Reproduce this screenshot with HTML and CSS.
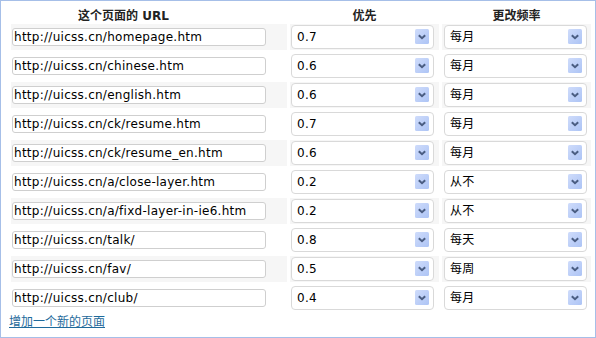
FILE: index.html
```html
<!DOCTYPE html>
<html>
<head>
<meta charset="utf-8">
<link rel="stylesheet" href="styles.css">
</head>
<body>
<div class="frame">
  <table class="grid">
    <thead>
      <tr>
        <th class="h-url">这个页面的 URL</th>
        <th class="h-pri">优先</th>
        <th class="h-freq">更改频率</th>
      </tr>
    </thead>
    <tbody>
      <tr class="odd">
        <td class="c-url"><input class="url" type="text" value="http://uicss.cn/homepage.htm"></td>
        <td class="c-pri"><div class="sel"><span class="val">0.7</span><span class="btn"><svg width="14" height="15" viewBox="0 0 14 15"><rect x="0" y="0" width="14" height="15" rx="1.5" fill="url(#g)"/><path d="M3.8 6.2 L7 9.2 L10.2 6.2" fill="none" stroke="#4a5d82" stroke-width="2"/></svg></span></div></td>
        <td class="c-freq"><div class="sel"><span class="val">每月</span><span class="btn"><svg width="14" height="15" viewBox="0 0 14 15"><rect x="0" y="0" width="14" height="15" rx="1.5" fill="url(#g)"/><path d="M3.8 6.2 L7 9.2 L10.2 6.2" fill="none" stroke="#4a5d82" stroke-width="2"/></svg></span></div></td>
      </tr>
      <tr>
        <td class="c-url"><input class="url" type="text" value="http://uicss.cn/chinese.htm"></td>
        <td class="c-pri"><div class="sel"><span class="val">0.6</span><span class="btn"><svg width="14" height="15" viewBox="0 0 14 15"><rect x="0" y="0" width="14" height="15" rx="1.5" fill="url(#g)"/><path d="M3.8 6.2 L7 9.2 L10.2 6.2" fill="none" stroke="#4a5d82" stroke-width="2"/></svg></span></div></td>
        <td class="c-freq"><div class="sel"><span class="val">每月</span><span class="btn"><svg width="14" height="15" viewBox="0 0 14 15"><rect x="0" y="0" width="14" height="15" rx="1.5" fill="url(#g)"/><path d="M3.8 6.2 L7 9.2 L10.2 6.2" fill="none" stroke="#4a5d82" stroke-width="2"/></svg></span></div></td>
      </tr>
      <tr class="odd">
        <td class="c-url"><input class="url" type="text" value="http://uicss.cn/english.htm"></td>
        <td class="c-pri"><div class="sel"><span class="val">0.6</span><span class="btn"><svg width="14" height="15" viewBox="0 0 14 15"><rect x="0" y="0" width="14" height="15" rx="1.5" fill="url(#g)"/><path d="M3.8 6.2 L7 9.2 L10.2 6.2" fill="none" stroke="#4a5d82" stroke-width="2"/></svg></span></div></td>
        <td class="c-freq"><div class="sel"><span class="val">每月</span><span class="btn"><svg width="14" height="15" viewBox="0 0 14 15"><rect x="0" y="0" width="14" height="15" rx="1.5" fill="url(#g)"/><path d="M3.8 6.2 L7 9.2 L10.2 6.2" fill="none" stroke="#4a5d82" stroke-width="2"/></svg></span></div></td>
      </tr>
      <tr>
        <td class="c-url"><input class="url" type="text" value="http://uicss.cn/ck/resume.htm"></td>
        <td class="c-pri"><div class="sel"><span class="val">0.7</span><span class="btn"><svg width="14" height="15" viewBox="0 0 14 15"><rect x="0" y="0" width="14" height="15" rx="1.5" fill="url(#g)"/><path d="M3.8 6.2 L7 9.2 L10.2 6.2" fill="none" stroke="#4a5d82" stroke-width="2"/></svg></span></div></td>
        <td class="c-freq"><div class="sel"><span class="val">每月</span><span class="btn"><svg width="14" height="15" viewBox="0 0 14 15"><rect x="0" y="0" width="14" height="15" rx="1.5" fill="url(#g)"/><path d="M3.8 6.2 L7 9.2 L10.2 6.2" fill="none" stroke="#4a5d82" stroke-width="2"/></svg></span></div></td>
      </tr>
      <tr class="odd">
        <td class="c-url"><input class="url" type="text" value="http://uicss.cn/ck/resume_en.htm"></td>
        <td class="c-pri"><div class="sel"><span class="val">0.6</span><span class="btn"><svg width="14" height="15" viewBox="0 0 14 15"><rect x="0" y="0" width="14" height="15" rx="1.5" fill="url(#g)"/><path d="M3.8 6.2 L7 9.2 L10.2 6.2" fill="none" stroke="#4a5d82" stroke-width="2"/></svg></span></div></td>
        <td class="c-freq"><div class="sel"><span class="val">每月</span><span class="btn"><svg width="14" height="15" viewBox="0 0 14 15"><rect x="0" y="0" width="14" height="15" rx="1.5" fill="url(#g)"/><path d="M3.8 6.2 L7 9.2 L10.2 6.2" fill="none" stroke="#4a5d82" stroke-width="2"/></svg></span></div></td>
      </tr>
      <tr>
        <td class="c-url"><input class="url" type="text" value="http://uicss.cn/a/close-layer.htm"></td>
        <td class="c-pri"><div class="sel"><span class="val">0.2</span><span class="btn"><svg width="14" height="15" viewBox="0 0 14 15"><rect x="0" y="0" width="14" height="15" rx="1.5" fill="url(#g)"/><path d="M3.8 6.2 L7 9.2 L10.2 6.2" fill="none" stroke="#4a5d82" stroke-width="2"/></svg></span></div></td>
        <td class="c-freq"><div class="sel"><span class="val">从不</span><span class="btn"><svg width="14" height="15" viewBox="0 0 14 15"><rect x="0" y="0" width="14" height="15" rx="1.5" fill="url(#g)"/><path d="M3.8 6.2 L7 9.2 L10.2 6.2" fill="none" stroke="#4a5d82" stroke-width="2"/></svg></span></div></td>
      </tr>
      <tr class="odd">
        <td class="c-url"><input class="url" type="text" value="http://uicss.cn/a/fixd-layer-in-ie6.htm"></td>
        <td class="c-pri"><div class="sel"><span class="val">0.2</span><span class="btn"><svg width="14" height="15" viewBox="0 0 14 15"><rect x="0" y="0" width="14" height="15" rx="1.5" fill="url(#g)"/><path d="M3.8 6.2 L7 9.2 L10.2 6.2" fill="none" stroke="#4a5d82" stroke-width="2"/></svg></span></div></td>
        <td class="c-freq"><div class="sel"><span class="val">从不</span><span class="btn"><svg width="14" height="15" viewBox="0 0 14 15"><rect x="0" y="0" width="14" height="15" rx="1.5" fill="url(#g)"/><path d="M3.8 6.2 L7 9.2 L10.2 6.2" fill="none" stroke="#4a5d82" stroke-width="2"/></svg></span></div></td>
      </tr>
      <tr>
        <td class="c-url"><input class="url" type="text" value="http://uicss.cn/talk/"></td>
        <td class="c-pri"><div class="sel"><span class="val">0.8</span><span class="btn"><svg width="14" height="15" viewBox="0 0 14 15"><rect x="0" y="0" width="14" height="15" rx="1.5" fill="url(#g)"/><path d="M3.8 6.2 L7 9.2 L10.2 6.2" fill="none" stroke="#4a5d82" stroke-width="2"/></svg></span></div></td>
        <td class="c-freq"><div class="sel"><span class="val">每天</span><span class="btn"><svg width="14" height="15" viewBox="0 0 14 15"><rect x="0" y="0" width="14" height="15" rx="1.5" fill="url(#g)"/><path d="M3.8 6.2 L7 9.2 L10.2 6.2" fill="none" stroke="#4a5d82" stroke-width="2"/></svg></span></div></td>
      </tr>
      <tr class="odd">
        <td class="c-url"><input class="url" type="text" value="http://uicss.cn/fav/"></td>
        <td class="c-pri"><div class="sel"><span class="val">0.5</span><span class="btn"><svg width="14" height="15" viewBox="0 0 14 15"><rect x="0" y="0" width="14" height="15" rx="1.5" fill="url(#g)"/><path d="M3.8 6.2 L7 9.2 L10.2 6.2" fill="none" stroke="#4a5d82" stroke-width="2"/></svg></span></div></td>
        <td class="c-freq"><div class="sel"><span class="val">每周</span><span class="btn"><svg width="14" height="15" viewBox="0 0 14 15"><rect x="0" y="0" width="14" height="15" rx="1.5" fill="url(#g)"/><path d="M3.8 6.2 L7 9.2 L10.2 6.2" fill="none" stroke="#4a5d82" stroke-width="2"/></svg></span></div></td>
      </tr>
      <tr>
        <td class="c-url"><input class="url" type="text" value="http://uicss.cn/club/"></td>
        <td class="c-pri"><div class="sel"><span class="val">0.4</span><span class="btn"><svg width="14" height="15" viewBox="0 0 14 15"><rect x="0" y="0" width="14" height="15" rx="1.5" fill="url(#g)"/><path d="M3.8 6.2 L7 9.2 L10.2 6.2" fill="none" stroke="#4a5d82" stroke-width="2"/></svg></span></div></td>
        <td class="c-freq"><div class="sel"><span class="val">每月</span><span class="btn"><svg width="14" height="15" viewBox="0 0 14 15"><rect x="0" y="0" width="14" height="15" rx="1.5" fill="url(#g)"/><path d="M3.8 6.2 L7 9.2 L10.2 6.2" fill="none" stroke="#4a5d82" stroke-width="2"/></svg></span></div></td>
      </tr>
    </tbody>
  </table>
  <a class="add" href="#">增加一个新的页面</a>
</div>
<svg class="defs" width="0" height="0">
  <defs>
    <linearGradient id="g" x1="0" y1="0" x2="1" y2="1">
      <stop offset="0" stop-color="#cfdcfb"/>
      <stop offset="1" stop-color="#adc4f5"/>
    </linearGradient>
  </defs>
</svg>
</body>
</html>
```
FILE: styles.css
```css
html, body {
  margin: 0;
  padding: 0;
  background: #fff;
}
body {
  font-family: "DejaVu Sans", "Noto Sans CJK SC", sans-serif;
  font-size: 12px;
  color: #000;
}
.frame {
  box-sizing: border-box;
  width: 596px;
  height: 338px;
  border: 1px solid #a6bfe8;
  padding: 0 0 0 7px;
  overflow: hidden;
}
.grid {
  border-collapse: separate;
  border-spacing: 3px;
}
.grid th {
  height: 17px;
  padding: 0;
  font-size: 12px;
  line-height: 10px;
  font-weight: bold;
  color: #222;
  vertical-align: bottom;
}
.h-url {
  text-align: left;
  padding-left: 67px !important;
}
.h-pri, .h-freq {
  text-align: center;
}
.grid td {
  height: 24px;
  padding: 1px;
  vertical-align: middle;
}
.grid tr.odd td {
  background: #f6f6f6;
}
.grid td.c-url {
  padding-right: 21px;
}
.grid td.c-pri {
  padding-right: 5px;
}
.grid td.c-freq {
  padding-left: 2px;
  padding-right: 4px;
}
.url {
  display: block;
  box-sizing: border-box;
  width: 254px;
  height: 18px;
  margin: 0;
  padding: 0 1px;
  border: 1px solid #cfcfcf;
  border-radius: 3px;
  background: #fff;
  font-family: "DejaVu Sans", sans-serif;
  font-size: 12px;
  letter-spacing: 0.27px;
  color: #000;
  outline: none;
}
.sel {
  box-sizing: border-box;
  width: 143px;
  height: 24px;
  border: 1px solid #d9d9d9;
  border-radius: 4px;
  background: #fff;
  display: flex;
  align-items: center;
  justify-content: space-between;
  padding: 0 4px 0 5px;
}
.val {
  font-family: "DejaVu Sans", "Noto Sans CJK SC", sans-serif;
  font-size: 12px;
  line-height: 14px;
  letter-spacing: 0.27px;
}
.btn {
  display: block;
  width: 14px;
  height: 15px;
  margin-top: -1px;
}
.btn svg {
  display: block;
}
.add {
  display: block;
  width: max-content;
  margin-left: 1px;
  font-family: "Noto Sans CJK SC", sans-serif;
  font-size: 12px;
  line-height: 14px;
  color: #1e6a9b;
  text-decoration: underline;
}
.defs {
  position: absolute;
  width: 0;
  height: 0;
}
```
